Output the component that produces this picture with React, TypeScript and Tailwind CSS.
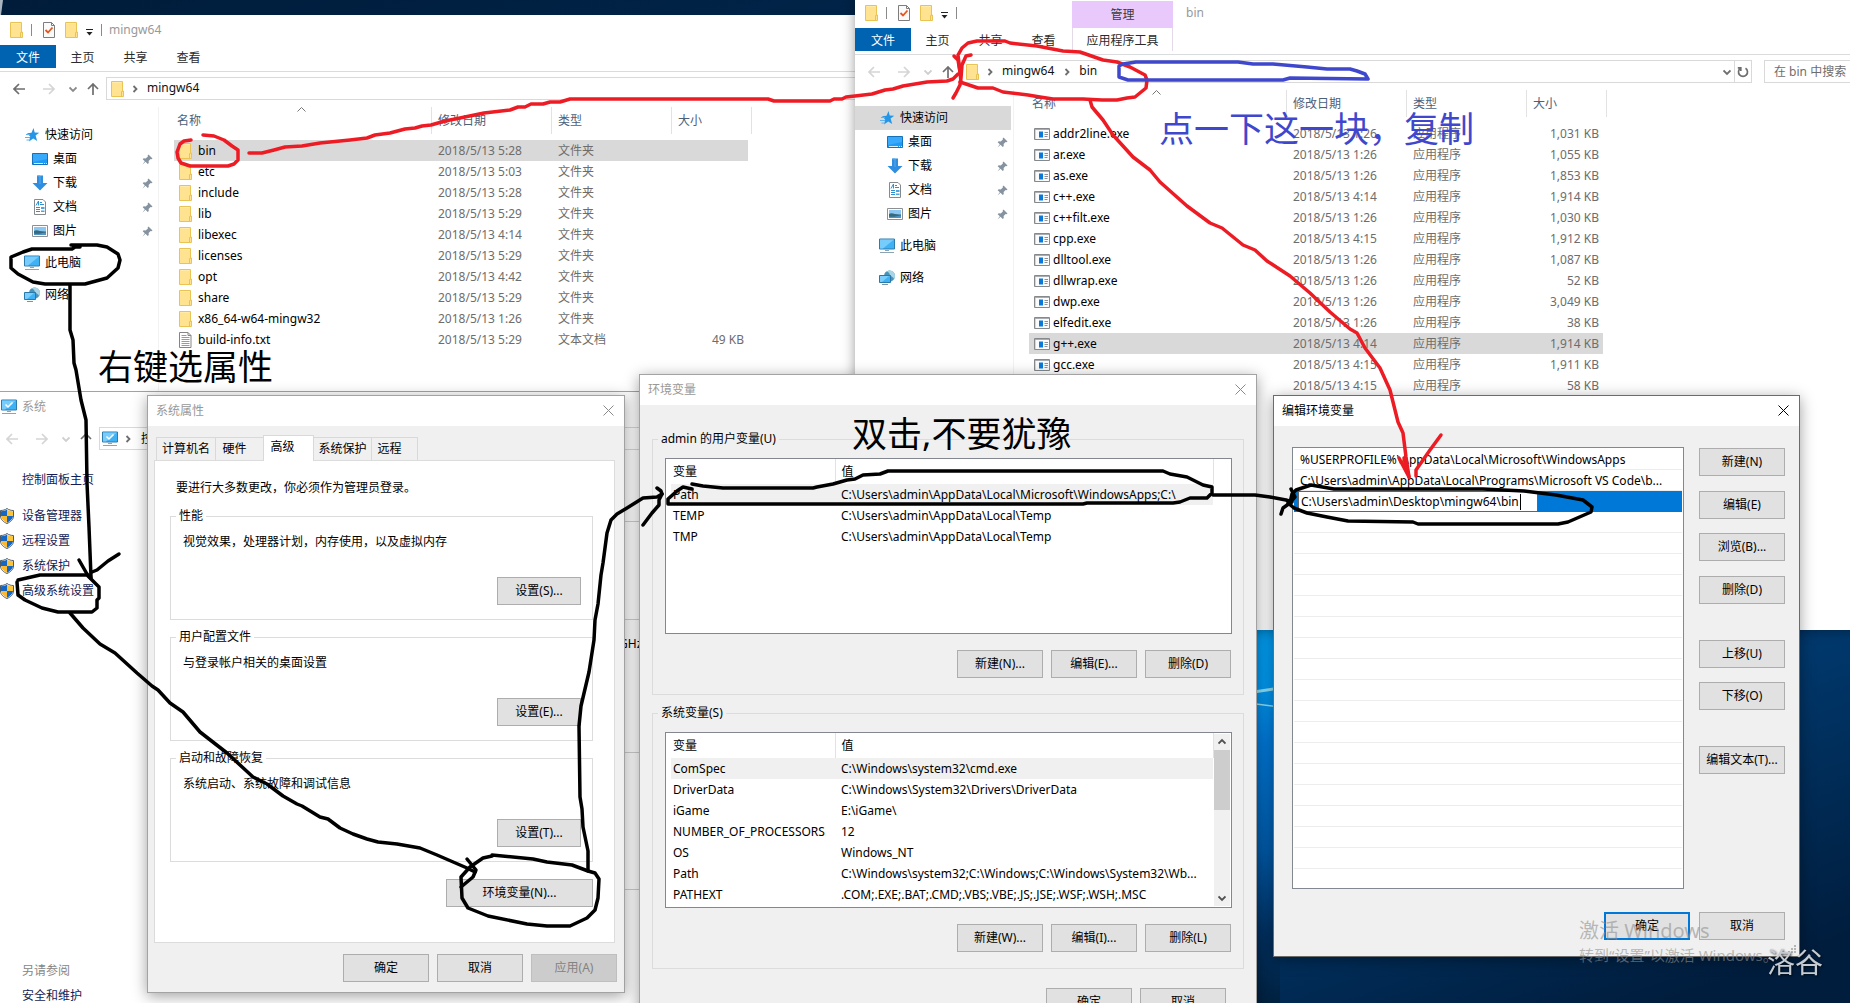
import React from "react";

/* ---------- icons ---------- */

const Folder = () => (
  <svg width="13" height="16" viewBox="0 0 13 16" className="shrink-0">
    <path d="M.5.5h11v9.500h1v5.500H.5z" fill="#ffe391" stroke="#e9c455" />
    <path d="M10.500 15V10.500h1V1" fill="none" stroke="#e9c455" />
    <path d="M1.500 1.500h9" stroke="#ffeaa8" />
  </svg>
);

const CheckDoc = () => (
  <svg width="12" height="16" viewBox="0 0 12 16" className="shrink-0">
    <path d="M.5.5h8l3 3v12H.5z" fill="#fafafa" stroke="#7d7d7d" />
    <path d="M8.500.5v3h3" fill="none" stroke="#7d7d7d" />
    <path d="M2.500 8l2.500 2.500 4.500-5" fill="none" stroke="#e8541a" strokeWidth="1.800" />
  </svg>
);

const TextFile = () => (
  <svg width="13" height="16" viewBox="0 0 13 16" className="shrink-0">
    <path d="M.5.5h8.500l3 3v12H.5z" fill="#fff" stroke="#858585" />
    <path d="M9 .5v3h3" fill="none" stroke="#858585" />
    <path d="M2.500 3.500h5M2.500 5.500h8M2.500 7.500h8M2.500 9.500h8M2.500 11.500h8M2.500 13.500h8" stroke="#9a9a9a" />
  </svg>
);

const ExeFile = () => (
  <svg width="16" height="12" viewBox="0 0 16 12" className="shrink-0">
    <path d="M.5.5h15v11H.5z" fill="#fbfbfb" stroke="#85898c" />
    <path d="M1 1.500h14" stroke="#a9adb1" />
    <path d="M1.500 2v9" stroke="#d5d8da" />
    <path d="M5 3.500h4v6H5z" fill="#0a78d7" />
    <path d="M10.500 4.500H14M10.500 6.500H14M10.500 8.500h3" stroke="#8e9194" />
  </svg>
);

const Star = () => (
  <svg width="16" height="16" viewBox="0 0 16 16" className="shrink-0">
    <path d="M9.500 1l1.200 4.400 4.500.3-3.600 2.900 1.600 5.400-4-2.500L5 14.500l1.200-5L3 6.200l4.500-.5z" fill="#2596e6" />
    <path d="M2 7.500h4M1 10.500h5M2.500 13h3" stroke="#5cb2ee" />
  </svg>
);

const DesktopIcon = () => (
  <svg width="16" height="12" viewBox="0 0 16 12" className="shrink-0">
    <path d="M.5.5h15v11H.5z" fill="#1e9bf5" stroke="#1572b8" />
    <path d="M1 1h14v5L1 9z" fill="#38a9fb" />
    <path d="M2 10.500h9M12 10.500h1M14 10.500h1" stroke="#d9efff" />
  </svg>
);

const DownloadIcon = () => (
  <svg width="16" height="16" viewBox="0 0 16 16" className="shrink-0">
    <path d="M5 .5h6v7.500h4.500L8 15.500.5 8H5z" fill="#2f8ee0" />
    <path d="M5.500 1h2.500v8" fill="none" stroke="#58a9ec" />
  </svg>
);

const DocIcon = () => (
  <svg width="16" height="16" viewBox="0 0 16 16" className="shrink-0">
    <path d="M2.500.5H11l2.500 2.500v12.500h-11z" fill="#fff" stroke="#858a8e" />
    <path d="M4 6.500L6.500 2v4.500M8 3.500h2M8 5.500h4M4 8.500h4M4 10.500h4M4 12.500h4" fill="none" stroke="#2f8fd0" />
    <path d="M9 8h3.500v2H9zM9 11.500h3.500v1.500H9z" fill="#4ea5dd" />
  </svg>
);

const PictureIcon = () => (
  <svg width="16" height="12" viewBox="0 0 16 12" className="shrink-0">
    <path d="M.5.5h15v11H.5z" fill="#fff" stroke="#8c9094" />
    <path d="M2 2h12v8H2z" fill="#8cc7f2" />
    <path d="M2 6c3-2 6 1 12 .5V10H2z" fill="#35697f" />
    <path d="M2 8.500c4 1 8-.5 12-1V10H2z" fill="#4d94c4" />
  </svg>
);

const Computer = ({ check = false }: { check?: boolean }) => (
  <svg width="16" height="16" viewBox="0 0 16 16" className="shrink-0">
    <path d="M.5 1h15v10H.5z" fill="#3fb2f5" stroke="#2e7cab" />
    <path d="M1 1.500h14L4 10.500H1z" fill="#78ccfb" />
    <path d="M6 12.500h4M1 14.500h14" stroke="#8ba3b3" />
    {check && <path d="M4.500 5.500L7 8l4.500-4.500" fill="none" stroke="#fff" strokeWidth="1.500" />}
  </svg>
);

const Network = () => (
  <svg width="16" height="16" viewBox="0 0 16 16" className="shrink-0">
    <circle cx="10.500" cy="6" r="5.500" fill="#4a93b8" />
    <path d="M8 1.500c3 1 2 3 4 4.500s3 2 3 3.500c2-3 1-7-2-8.500S9 .8 8 1.500z" fill="#a8d4e4" />
    <path d="M.5 5.500h11v7H.5z" fill="#3fb2f5" stroke="#2878a8" />
    <path d="M1 6h9l-7 6H1z" fill="#7bcdfb" />
    <path d="M3 14.500h6" stroke="#7b94a5" />
  </svg>
);

const Shield = () => (
  <svg width="14" height="16" viewBox="0 0 14 16" className="shrink-0">
    <path d="M7 .5C5 2 3 2.500.5 2.500V8c0 3.500 3 6 6.500 7.500C10.500 14 13.500 11.500 13.500 8V2.500C11 2.500 9 2 7 .5z" fill="#fff" stroke="#4b5a68" />
    <path d="M7 1.500V8H1V3.200C3.500 3.100 5.500 2.600 7 1.500z" fill="#1467c4" />
    <path d="M7 1.500V8h6V3.200C10.500 3.100 8.500 2.600 7 1.500z" fill="#fcc43a" />
    <path d="M7 8v6.800C4.200 13.400 1.200 11 1 8z" fill="#fcb82e" />
    <path d="M7 8v6.800c2.800-1.400 5.800-3.800 6-6.800z" fill="#1467c4" />
  </svg>
);

const Pin = () => (
  <svg width="11" height="11" viewBox="0 0 11 11" className="shrink-0">
    <path d="M6.500.5l4 4-1 .8-.9-.2-2 2 .2 2-1 1-2.300-2.300L.5 10.500l2.300-3.200L.7 5.200l1-1 2 .2 2.200-2-.2-1z" fill="#8593a0" />
  </svg>
);

const Arrow = ({ dir, color = "#6e6e6e" }: { dir: "left" | "right" | "up"; color?: string }) => (
  <svg width="12" height="12" viewBox="0 0 12 12" className="shrink-0" fill="none" stroke={color} strokeWidth="1.700">
    {dir === "left" && <path d="M12 6H1M6 1L1 6l5 5" />}
    {dir === "right" && <path d="M0 6h11M6 1l5 5-5 5" />}
    {dir === "up" && <path d="M6 12V1M1 6l5-5 5 5" />}
  </svg>
);

const Chevron = ({ dir, color = "#6e6e6e" }: { dir: "down" | "right" | "up"; color?: string }) => (
  <svg width="8" height="8" viewBox="0 0 8 8" className="shrink-0" fill="none" stroke={color} strokeWidth="1.800">
    {dir === "down" && <path d="M.5 2.500l3.500 3.500 3.500-3.500" />}
    {dir === "right" && <path d="M2.500 1l3 3-3 3" />}
    {dir === "up" && <path d="M.5 5.500L4 2l3.500 3.500" />}
  </svg>
);

const Cross = ({ color }: { color: string }) => (
  <svg width="11" height="11" viewBox="0 0 11 11" fill="none" stroke={color}>
    <path d="M.5.5l10 10M10.500.5l-10 10" />
  </svg>
);

/* ---------- explorer windows ---------- */

type Row = { name: string; date: string; type: string; size?: string; selected?: boolean };

const pinned = [
  { label: "桌面", icon: <DesktopIcon /> },
  { label: "下载", icon: <DownloadIcon /> },
  { label: "文档", icon: <DocIcon /> },
  { label: "图片", icon: <PictureIcon /> },
];

function FileTable({ rows, icon }: { rows: Row[]; icon: (r: Row) => React.ReactNode }) {
  const head = "h-[27px] border-r border-[#e2e2e2] flex items-center text-[#4c607a]";
  return (
    <table className="table-fixed w-[578px] border-collapse text-left">
      <colgroup>
        <col className="w-[258px]" />
        <col className="w-[120px]" />
        <col className="w-[120px]" />
        <col className="w-[76px]" />
        <col className="w-[4px]" />
      </colgroup>
      <thead>
        <tr className="h-[33px] align-top">
          <th className="relative p-0 font-normal">
            <div className={head + " pl-[3px]"}>名称</div>
            <svg width="9" height="5" viewBox="0 0 9 5" className="absolute left-[123px] top-0" fill="none" stroke="#777">
              <path d="M.5 4.500l4-4 4 4" />
            </svg>
          </th>
          <th className="p-0 font-normal"><div className={head + " pl-[6px]"}>修改日期</div></th>
          <th className="p-0 font-normal"><div className={head + " pl-[6px]"}>类型</div></th>
          <th colSpan={2} className="p-0 font-normal"><div className={head + " pl-[6px]"}>大小</div></th>
        </tr>
      </thead>
      <tbody>
        {rows.map((r) => {
          const bg = r.selected ? "bg-[#d9d9d9]" : "";
          return (
            <tr key={r.name} className="h-[21px] text-[#6d6d6d]">
              <td className={bg + " p-0 text-black"}>
                <div className="flex items-center h-[21px] pl-[5px]">
                  <span className="w-[19px] flex">{icon(r)}</span>
                  <span className="whitespace-nowrap">{r.name}</span>
                </div>
              </td>
              <td className={bg + " p-0 pl-[6px] whitespace-nowrap"}>{r.date}</td>
              <td className={bg + " p-0 pl-[6px] whitespace-nowrap"}>{r.type}</td>
              <td className={bg + " p-0 pr-1 text-right whitespace-nowrap"}>{r.size}</td>
              <td className="p-0" />
            </tr>
          );
        })}
      </tbody>
    </table>
  );
}

function Explorer({
  className,
  title,
  crumbs,
  tool,
  rows,
  icon,
  navDimmed = false,
  search,
}: {
  className: string;
  title: string;
  crumbs: string[];
  tool?: { group: string; tab: string };
  rows: Row[];
  icon: (r: Row) => React.ReactNode;
  navDimmed?: boolean;
  search?: string;
}) {
  return (
    <section className={"absolute bg-white " + className}>
      <header className="flex h-[30px]">
        <div className="w-[217px] shrink-0 flex items-center pl-[10px]">
          <Folder />
          <span className="ml-2 w-px h-3 bg-[#8a8a8a]" />
          <span className="ml-[11px] flex"><CheckDoc /></span>
          <span className="ml-[10px] flex"><Folder /></span>
          <svg width="7" height="7" viewBox="0 0 7 7" className="ml-2 mt-1 shrink-0">
            <path d="M0 .5h7" stroke="#222" />
            <path d="M.5 3h6l-3 3.500z" fill="#222" />
          </svg>
          <span className="ml-2 w-px h-3 bg-[#8a8a8a]" />
          {!tool && <h1 className="ml-[7px] text-[#999]">{title}</h1>}
        </div>
        {tool && (
          <>
            <div className="mt-[3px] w-[101px] bg-[#e9c9fb] text-[#3a3a3a] flex items-center justify-center">{tool.group}</div>
            <h1 className="pl-[13px] self-center text-[#999]">{title}</h1>
          </>
        )}
      </header>
      <nav className="flex h-[27px] border-b border-[#dadbdc] text-[#2b2b2b]">
        <button className="w-14 h-[23px] pt-0.5 bg-[#0063b1] text-white">文件</button>
        <button className="w-[53px] h-[23px] pt-0.5">主页</button>
        <button className="w-[53px] h-[23px] pt-0.5">共享</button>
        <button className="w-[53px] h-[23px] pt-0.5">查看</button>
        {tool && <button className="ml-0.5 w-[101px] h-[23px] pt-0.5 border-x border-[#e3d9e8]">{tool.tab}</button>}
      </nav>
      <div className="mt-[5px] h-[23px] flex items-center pl-[13px]">
        <Arrow dir="left" color={navDimmed ? "#d5d5d5" : "#6e6e6e"} />
        <span className="ml-[18px] flex"><Arrow dir="right" color="#d5d5d5" /></span>
        <span className="ml-[14px] flex"><Chevron dir="down" color={navDimmed ? "#cfcfcf" : "#8a8a8a"} /></span>
        <span className="ml-[10px] flex"><Arrow dir="up" /></span>
        <div className="ml-[7px] flex-1 h-full border border-[#d9d9d9] flex items-center pl-1">
          <Folder />
          {crumbs.map((c) => (
            <span key={c} className="flex items-center">
              <span className="ml-[7px] mr-[6px] flex"><Chevron dir="right" /></span>
              <a href="#" className="text-[#111] px-0.5 pb-0.5">{c}</a>
            </span>
          ))}
          <span className="ml-auto mr-[3px] flex"><Chevron dir="down" /></span>
          {search && (
            <button aria-label="刷新" className="w-[17px] h-full border-l border-[#d9d9d9] flex items-center justify-center">
              <svg width="12" height="12" viewBox="0 0 12 12" fill="none" stroke="#6e6e6e" strokeWidth="1.700">
                <path d="M8.500 2.200A4.500 4.500 0 1 1 3.500 2.200" />
                <path d="M3.800 5V1.800H.8" />
              </svg>
            </button>
          )}
        </div>
        {search && (
          <input
            aria-label={search}
            placeholder={search}
            className="ml-3 w-[246px] h-full border border-[#d9d9d9] pl-[9px] bg-white placeholder:text-[#6d6d6d] outline-none"
          />
        )}
      </div>
      <div className="mt-[7px] flex min-h-[284px]">
        <aside className="w-[159px] shrink-0 border-r border-[#f2f2f2] pt-4">
          <a href="#" className={"flex items-center h-6 w-[156px] pl-6 " + (navDimmed ? "bg-[#d9d9d9]" : "")}>
            <Star />
            <span className="ml-[5px]">快速访问</span>
          </a>
          {pinned.map((p) => (
            <a href="#" key={p.label} className="flex items-center h-6 w-[156px] pl-8 pr-[3px]">
              {p.icon}
              <span className="ml-[5px] mr-auto">{p.label}</span>
              <Pin />
            </a>
          ))}
          <a href="#" className="mt-2 flex items-center h-6 pl-6">
            <Computer />
            <span className="ml-[5px]">此电脑</span>
          </a>
          <a href="#" className="mt-2 flex items-center h-6 pl-6">
            <Network />
            <span className="ml-[5px]">网络</span>
          </a>
        </aside>
        <main className="pl-[15px]">
          <FileTable rows={rows} icon={icon} />
        </main>
      </div>
    </section>
  );
}

const mingwRows: Row[] = [
  { name: "bin", date: "2018/5/13 5:28", type: "文件夹", selected: true },
  { name: "etc", date: "2018/5/13 5:03", type: "文件夹" },
  { name: "include", date: "2018/5/13 5:28", type: "文件夹" },
  { name: "lib", date: "2018/5/13 5:29", type: "文件夹" },
  { name: "libexec", date: "2018/5/13 4:14", type: "文件夹" },
  { name: "licenses", date: "2018/5/13 5:29", type: "文件夹" },
  { name: "opt", date: "2018/5/13 4:42", type: "文件夹" },
  { name: "share", date: "2018/5/13 5:29", type: "文件夹" },
  { name: "x86_64-w64-mingw32", date: "2018/5/13 1:26", type: "文件夹" },
  { name: "build-info.txt", date: "2018/5/13 5:29", type: "文本文档", size: "49 KB" },
];

const binRows: Row[] = [
  ["addr2line.exe", "1:26", "1,031 KB"],
  ["ar.exe", "1:26", "1,055 KB"],
  ["as.exe", "1:26", "1,853 KB"],
  ["c++.exe", "4:14", "1,914 KB"],
  ["c++filt.exe", "1:26", "1,030 KB"],
  ["cpp.exe", "4:15", "1,912 KB"],
  ["dlltool.exe", "1:26", "1,087 KB"],
  ["dllwrap.exe", "1:26", "52 KB"],
  ["dwp.exe", "1:26", "3,049 KB"],
  ["elfedit.exe", "1:26", "38 KB"],
  ["g++.exe", "4:14", "1,914 KB"],
  ["gcc.exe", "4:15", "1,911 KB"],
  ["gcc-ar.exe", "4:15", "58 KB"],
].map(([name, time, size]) => ({
  name,
  date: "2018/5/13 " + time,
  type: "应用程序",
  size,
  selected: name === "g++.exe",
}));

/* ---------- dialogs ---------- */

function PushButton({ children, className = "w-[86px]", disabled = false }: { children: React.ReactNode; className?: string; disabled?: boolean }) {
  const look = disabled ? "bg-[#cccccc] border-[#bfbfbf] text-[#838383]" : "bg-[#e1e1e1] border-[#adadad]";
  return (
    <button disabled={disabled} className={"h-7 shrink-0 border " + look + " " + className}>
      {children}
    </button>
  );
}

function Dialog({ title, active = false, className, children }: { title: string; active?: boolean; className: string; children: React.ReactNode }) {
  return (
    <section
      role="dialog"
      aria-label={title}
      className={"absolute border bg-[#f0f0f0] shadow-[0_3px_14px_rgba(0,0,0,0.38)] " + (active ? "border-[#6b6b6b] " : "border-[#a3a3a3] ") + className}
    >
      <header className={"h-[30px] bg-white flex items-center justify-between pl-2 pr-[10px] " + (active ? "text-black" : "text-[#999]")}>
        <h2>{title}</h2>
        <button aria-label="关闭" className="pb-0.5"><Cross color={active ? "#000" : "#8a8a8a"} /></button>
      </header>
      {children}
    </section>
  );
}

function SettingGroup({ legend, text, button }: { legend: string; text: string; button: string }) {
  return (
    <fieldset className="border border-[#dcdcdc] flex flex-col pb-[14px]">
      <legend className="ml-[5px] px-[3px] leading-4">{legend}</legend>
      <p className="mt-[10px] pl-3 leading-4">{text}</p>
      <PushButton className="mt-[27px] mr-[11px] self-end w-[84px]">{button}</PushButton>
    </fieldset>
  );
}

function SystemProperties() {
  const tab = "h-[23px] border border-b-0 border-[#d9d9d9] bg-[#f0f0f0]";
  return (
    <Dialog title="系统属性" className="left-[147px] top-[395px] w-[478px]">
      <div className="pt-[9px] pl-[6px] pr-[9px]">
        <div role="tablist" className="flex items-end h-[25px] pl-0.5">
          <button role="tab" className={tab + " w-[60px]"}>计算机名</button>
          <button role="tab" className={tab + " w-[47px] border-x-0 pr-[10px]"}>硬件</button>
          <button role="tab" aria-selected className="relative -mb-px w-[51px] h-[26px] border border-b-0 border-[#d9d9d9] bg-white pb-1 pr-3">高级</button>
          <button role="tab" className={tab + " w-[58px] border-l-0"}>系统保护</button>
          <button role="tab" className={tab + " w-[46px] border-l-0 pr-[10px]"}>远程</button>
        </div>
        <div className="border border-[#dcdcdc] bg-white pt-[17px] pb-[35px] pl-[15px] pr-[21px] flex flex-col">
          <p className="pl-[6px] leading-5 mb-[10px]">要进行大多数更改，你必须作为管理员登录。</p>
          <div className="flex flex-col gap-[9px]">
            <SettingGroup legend="性能" text="视觉效果，处理器计划，内存使用，以及虚拟内存" button="设置(S)..." />
            <SettingGroup legend="用户配置文件" text="与登录帐户相关的桌面设置" button="设置(E)..." />
            <SettingGroup legend="启动和故障恢复" text="系统启动、系统故障和调试信息" button="设置(T)..." />
          </div>
          <PushButton className="mt-[17px] self-end w-[147px]">环境变量(N)...</PushButton>
        </div>
      </div>
      <footer className="flex justify-end gap-2 pt-[11px] pb-[10px] pr-[7px]">
        <PushButton>确定</PushButton>
        <PushButton>取消</PushButton>
        <PushButton disabled>应用(A)</PushButton>
      </footer>
    </Dialog>
  );
}

function VariableGroup({ legend, vars, buttons, scroll = false }: { legend: string; vars: string[][]; buttons: string[]; scroll?: boolean }) {
  return (
    <fieldset className="min-w-0 border border-[#dcdcdc] pb-4">
      <legend className="ml-[5px] px-[3px] leading-4">{legend}</legend>
      <div className="mt-[11px] ml-3 mr-[11px] h-[176px] border border-[#828790] bg-white pl-[5px] flex overflow-hidden">
        <table className="table-fixed w-[542px] h-min border-collapse text-left">
          <colgroup>
            <col className="w-[164px]" />
            <col className="w-[378px]" />
          </colgroup>
          <thead>
            <tr className="h-[25px]">
              <th className="p-0 pl-0.5 font-normal border-r border-[#e2e2e2]">变量</th>
              <th className="p-0 pl-[6px] font-normal border-r border-[#e2e2e2]">值</th>
            </tr>
          </thead>
          <tbody>
            {vars.map(([k, v], i) => (
              <tr key={k} className={"h-[21px] " + (i === 0 ? "bg-[#f0f0f0]" : "")}>
                <td className="p-0 pl-0.5 whitespace-nowrap">{k}</td>
                <td className="p-0 pl-[6px] whitespace-nowrap">{v}</td>
              </tr>
            ))}
          </tbody>
        </table>
        {scroll && (
          <div className="my-px w-4 shrink-0 bg-[#f0f0f0] flex flex-col items-center py-1">
            <Chevron dir="up" color="#505050" />
            <div className="mt-1 w-full h-[60px] bg-[#cdcdcd]" />
            <span className="mt-auto flex"><Chevron dir="down" color="#505050" /></span>
          </div>
        )}
      </div>
      <div className="mt-4 mr-3 flex justify-end gap-2">
        {buttons.map((b) => <PushButton key={b}>{b}</PushButton>)}
      </div>
    </fieldset>
  );
}

const userVars = [
  ["Path", "C:\\Users\\admin\\AppData\\Local\\Microsoft\\WindowsApps;C:\\"],
  ["TEMP", "C:\\Users\\admin\\AppData\\Local\\Temp"],
  ["TMP", "C:\\Users\\admin\\AppData\\Local\\Temp"],
];

const systemVars = [
  ["ComSpec", "C:\\Windows\\system32\\cmd.exe"],
  ["DriverData", "C:\\Windows\\System32\\Drivers\\DriverData"],
  ["iGame", "E:\\iGame\\"],
  ["NUMBER_OF_PROCESSORS", "12"],
  ["OS", "Windows_NT"],
  ["Path", "C:\\Windows\\system32;C:\\Windows;C:\\Windows\\System32\\Wb..."],
  ["PATHEXT", ".COM;.EXE;.BAT;.CMD;.VBS;.VBE;.JS;.JSE;.WSF;.WSH;.MSC"],
];

function EnvironmentVariables() {
  return (
    <Dialog title="环境变量" className="left-[639px] top-[374px] w-[618px]">
      <div className="pt-[26px] pl-3 pr-3 flex flex-col gap-[10px]">
        <VariableGroup legend="admin 的用户变量(U)" vars={userVars} buttons={["新建(N)...", "编辑(E)...", "删除(D)"]} />
        <VariableGroup legend="系统变量(S)" vars={systemVars} buttons={["新建(W)...", "编辑(I)...", "删除(L)"]} scroll />
      </div>
      <footer className="flex justify-end gap-2 pt-[19px] pb-3 pr-[30px]">
        <PushButton>确定</PushButton>
        <PushButton>取消</PushButton>
      </footer>
    </Dialog>
  );
}

function EditVariable() {
  const row = "h-[21px] pt-0.5 flex items-center border-b border-[#ededed] pl-[6px] whitespace-nowrap overflow-hidden";
  return (
    <Dialog active title="编辑环境变量" className="left-[1273px] top-[395px] w-[527px]">
      <div className="flex justify-between pt-[21px] pl-[18px] pr-[14px]">
        <ul className="w-[392px] h-[442px] border border-[#828790] bg-white p-px overflow-hidden">
          <li className={row}>%USERPROFILE%\AppData\Local\Microsoft\WindowsApps</li>
          <li className={row}>C:\Users\admin\AppData\Local\Programs\Microsoft VS Code\b...</li>
          <li className="relative h-[21px] bg-[#0078d7] pl-1 flex">
            <input
              aria-label="路径"
              defaultValue="C:\Users\admin\Desktop\mingw64\bin"
              className="w-60 h-[21px] bg-white border border-[#646464] pl-0.5 outline-none"
            />
            <span className="absolute left-[226px] top-[3px] w-px h-4 bg-black" />
          </li>
          {Array.from({ length: 17 }, (_, i) => <li key={i} className={row} />)}
        </ul>
        <div className="flex flex-col">
          <PushButton className="mt-px w-[86px]">新建(N)</PushButton>
          <PushButton className="mt-[15px] w-[86px]">编辑(E)</PushButton>
          <PushButton className="mt-[14px] w-[86px]">浏览(B)...</PushButton>
          <PushButton className="mt-[15px] w-[86px]">删除(D)</PushButton>
          <PushButton className="mt-9 w-[86px]">上移(U)</PushButton>
          <PushButton className="mt-[14px] w-[86px]">下移(O)</PushButton>
          <PushButton className="mt-9 w-[86px]">编辑文本(T)...</PushButton>
        </div>
      </div>
      <footer className="flex justify-end gap-[9px] pt-[23px] pb-4 pr-[14px]">
        <button className="w-[86px] h-7 border-2 border-[#0078d7] bg-[#e1e1e1]">确定</button>
        <PushButton>取消</PushButton>
      </footer>
      <svg width="9" height="9" viewBox="0 0 9 9" className="absolute right-0.5 bottom-0.5" fill="#b5b5b5">
        <path d="M6 0h2v2H6zM3 3h2v2H3zM6 3h2v2H6zM0 6h2v2H0zM3 6h2v2H3zM6 6h2v2H6z" />
      </svg>
    </Dialog>
  );
}

/* ---------- control panel window ---------- */

function SystemWindow() {
  return (
    <section className="absolute left-0 top-[391px] bottom-0 w-[1000px] overflow-hidden bg-white border-t border-[#a3a3a3]">
      <header className="h-[30px] flex items-center pl-px">
        <Computer check />
        <h2 className="ml-[5px] text-[#999]">系统</h2>
      </header>
      <div className="mt-[5px] h-[23px] flex items-center pl-[6px]">
        <Arrow dir="left" color="#d5d5d5" />
        <span className="ml-[18px] flex"><Arrow dir="right" color="#d5d5d5" /></span>
        <span className="ml-[14px] flex"><Chevron dir="down" color="#cfcfcf" /></span>
        <span className="ml-[10px] flex"><Arrow dir="up" /></span>
        <div className="ml-[7px] flex-1 h-full border border-[#d9d9d9] flex items-center pl-0.5">
          <Computer check />
          <span className="ml-[6px] mr-[7px] flex"><Chevron dir="right" /></span>
          <a href="#" className="px-0.5">控制面板</a>
        </div>
      </div>
      <div className="flex">
        <aside className="w-[180px] shrink-0 text-[#151c55]">
          <a href="#" className="mt-5 mb-[13px] h-5 flex items-center pl-[22px]">控制面板主页</a>
          {["设备管理器", "远程设置", "系统保护", "高级系统设置"].map((t) => (
            <a href="#" key={t} className="h-[25px] flex items-center">
              <Shield />
              <span className="ml-2">{t}</span>
            </a>
          ))}
          <p className="mt-[355px] h-[25px] flex items-center pl-[22px] text-[#868686]">另请参阅</p>
          <a href="#" className="h-[25px] flex items-center pl-[22px]">安全和维护</a>
        </aside>
        <main className="flex-1">
          <div className="h-[72px] border-b border-[#cfcfcf]" />
          <div className="h-[98px] border-b border-[#cfcfcf]" />
          <div className="h-[133px] border-b border-[#cfcfcf] pt-4 pl-[439px] leading-4">GHz</div>
          <div className="h-[137px] border-b border-[#cfcfcf]" />
        </main>
      </div>
    </section>
  );
}

/* ---------- hand-drawn marks ---------- */

const redInk = [
  "M203 135L214 136 224 140 232 146 238 150 238 160 234 164 228 166 190 166 181 163 178 158 177 152 180 144 184 141 191 140",
  "M249 153L262 153 274 150 285 147 302 146 320 143 350 140 367 138 375 135 390 133 405 129 415 128 422 126 431 125 445 121 460 118 484 113 510 110 518 107 525 107 531 104 543 104 550 102 560 102 570 99 768 99 774 101 830 101 834 99 842 99 846 97 855 96 872 94 885 90 893 89 903 86 927 82 947 81 953 79 958 74",
  "M954 56L958 60 960 72 961 82M971 55L966 56 962 65 961 78 960 85 956 93 953 98",
  "M960 72L958 55 962 48 968 43 977 41 1005 41 1010 43 1037 46 1063 51 1080 52 1103 60 1117 62 1130 67 1145 75 1147 80 1146 88 1135 97 1127 98 1117 100 1102 100 1083 99 1053 99 1040 97 1028 95 1003 92 993 88 978 88 960 82",
  "M1090 100L1092 107 1103 120 1113 135 1133 157 1150 170 1160 182 1187 206 1210 223 1222 228 1243 245 1255 250 1267 261 1290 276 1310 293 1330 312 1350 329 1357 333 1365 348 1380 368 1390 390 1395 410 1398 422 1403 433 1406 457 1409 477",
  "M1441 435L1430 450 1416 470 1416 476M1399 458L1409 477 1404 458",
];

const blueInk = [
  "M1135 62L1238 62 1253 64 1273 64 1307 67 1327 69 1350 69 1357 71 1365 74 1368 79 1290 78 1283 80 1128 80 1119 77 1119 66 1123 64 1136 62",
];

const blackInk = [
  "M71 245L97 245 107 247 118 254 120 260 118 268 107 278 85 284 45 284 33 282 18 274 11 268 11 257 23 252 32 249 72 249 75 247 80 247",
  "M70 285L70 330 73 340 74 363 76 370 81 400 86 420 87 483 89 527 91 577",
  "M79 560L87 574 91 578M119 554L108 561 97 570 92 572",
  "M18 580L40 575 87 575 99 587 99 598 97 600 97 608 92 612 58 612 42 608 25 600 18 595 17 582",
  "M70 613L83 628 100 644 115 653 137 673 152 686 158 690 170 703 183 712 200 732 227 753 253 777 267 784 283 796 297 804 302 806 320 817 328 819 340 828 353 834 367 839 378 842 397 844 420 848 437 855 467 868 475 872",
  "M467 859L476 870 473 877 461 887",
  "M492 855L533 859 547 862 572 865 588 871 595 873 599 879 598 898 595 910 587 918 570 926 547 926 527 924 488 916 468 908 462 898 461 877 470 867 483 858 492 856",
  "M588 871L588 851 583 827 582 809 580 797 579 726 581 706 589 672 594 640 595 620 598 604 601 575 603 563 607 533 611 520 617 514 627 508 643 498 657 497 662 494",
  "M657 488L661 491 662 494 659 500 659 505 652 513 643 525",
  "M692 489L683 487 677 491 668 499 668 504 1083 504 1087 503 1173 503 1180 502 1190 498 1207 498 1212 493 1212 487 1203 485 1187 477 1170 474 1163 471 888 471 880 474 863 475 855 479 847 480 833 484 817 487 813 488 723 488 703 486 692 484",
  "M1213 495L1255 495 1270 497 1286 500 1292 502",
  "M1291 489L1295 497 1290 503 1283 508 1281 514",
  "M1290 503L1292 494 1296 490 1311 485 1334 489 1483 489 1524 491 1556 495 1583 500 1592 507 1591 512 1568 522 1558 524 1418 524 1413 522 1348 521 1327 517 1307 513 1294 508 1288 503",
];

function Ink() {
  return (
    <svg
      width="1850"
      height="1003"
      viewBox="0 0 1850 1003"
      className="absolute left-0 top-0 pointer-events-none"
      fill="none"
      strokeWidth="3.500"
      strokeLinecap="round"
      strokeLinejoin="round"
    >
      {redInk.map((d) => <path key={d} d={d} stroke="#ed1c24" />)}
      {blueInk.map((d) => <path key={d} d={d} stroke="#3f48cc" />)}
      {blackInk.map((d) => <path key={d} d={d} stroke="#000" />)}
    </svg>
  );
}

function Wallpaper() {
  return (
    <div className="absolute inset-0 bg-[linear-gradient(160deg,#001c3a_0%,#003465_60%,#00386c_78%,#001d3d_96%)]">
      <div className="absolute left-[1240px] top-[600px] bottom-0 w-10 bg-[linear-gradient(180deg,#00a0f0_0%,#0097ee_22%,#0078d7_35%,#005aa8_62%,#003264_82%,#00213f_100%)]" />
      <svg width="40" height="40" viewBox="0 0 40 40" className="absolute left-[1240px] top-[680px]" stroke="#8fe0f5" fill="none">
        <path d="M0 14L40 8" strokeWidth="3" />
        <path d="M0 22L40 27" strokeWidth="1.500" />
      </svg>
      <svg width="6" height="15" viewBox="0 0 6 15" className="absolute left-0 top-0">
        <path d="M0 0h3L1 15H0z" fill="#a9b4c0" />
      </svg>
    </div>
  );
}

export default function App() {
  return (
    <div
      lang="zh-CN"
      className="relative w-full h-screen overflow-hidden text-xs leading-4 text-black font-['Noto_Sans','Noto_Sans_CJK_SC',sans-serif]"
    >
      <Wallpaper />
      <Explorer
        className="left-0 top-[15px] w-[900px]"
        title="mingw64"
        crumbs={["mingw64"]}
        rows={mingwRows}
        icon={(r) => (r.name.endsWith(".txt") ? <TextFile /> : <Folder />)}
      />
      <Explorer
        className="left-[855px] -right-40 -top-0.5 h-[632px] shadow-[0_0_12px_rgba(0,0,0,0.4)]"
        title="bin"
        crumbs={["mingw64", "bin"]}
        tool={{ group: "管理", tab: "应用程序工具" }}
        rows={binRows}
        icon={() => <ExeFile />}
        navDimmed
        search="在 bin 中搜索"
      />
      <SystemWindow />
      <SystemProperties />
      <EnvironmentVariables />
      <EditVariable />
      <Ink />
      <p className="absolute left-[98px] top-[347px] text-[35px] leading-10 whitespace-nowrap">右键选属性</p>
      <p className="absolute left-[852px] top-[414px] text-[35px] leading-10 whitespace-nowrap">双击,不要犹豫</p>
      <p className="absolute left-[1159px] top-[109px] text-[35px] leading-10 whitespace-nowrap text-[#3f48cc]">点一下这一块，复制</p>
      <div className="absolute left-[1579px] top-[919px] text-[#8f8f8f]/60 whitespace-nowrap">
        <p className="text-xl leading-6">激活 Windows</p>
        <p className="text-[15px] leading-6">转到“设置”以激活 Windows。</p>
      </div>
      <p className="absolute left-[1767px] top-[944px] text-[28px] leading-9 text-[#c5cbd1] drop-shadow-[1px_1px_1px_rgba(0,0,0,0.7)]">洛谷</p>
    </div>
  );
}
